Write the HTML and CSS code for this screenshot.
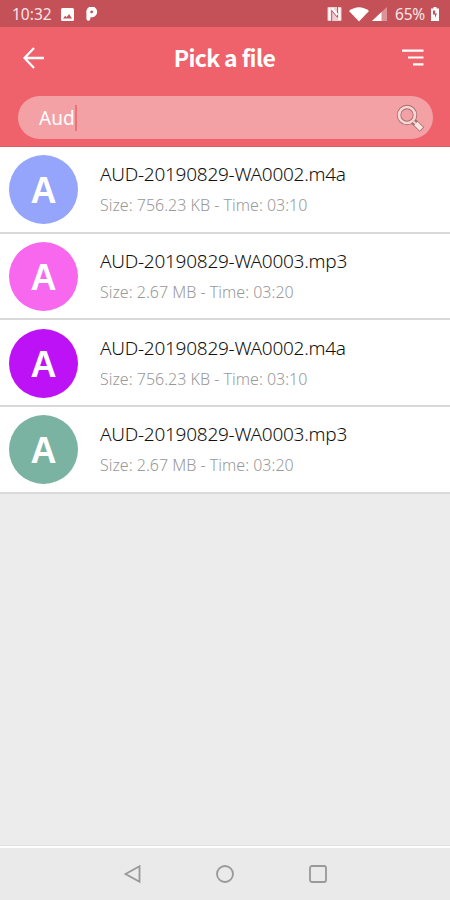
FILE: index.html
```html
<!DOCTYPE html>
<html lang="en">
<head>
<meta charset="utf-8">
<title>Pick a file</title>
<link rel="stylesheet" href="styles.css">
</head>
<body>
<div class="screen">
  <div class="status">
    <span class="clock">10:32</span>
    <svg class="photo" width="13" height="13" viewBox="0 0 13 13"><rect width="13" height="13" rx="1.5" fill="#fff"/><path d="M2 10.5 4.2 7.8 5.7 9.3 8 6 11 10.5Z" fill="#c45058"/></svg>
    <svg class="park" width="12" height="14" viewBox="0 0 12 14"><path d="M2.4 11.8V5.5A3.4 3.4 0 1 1 6 8.2H4.5" fill="none" stroke="#fff" stroke-width="4" stroke-linecap="round"/></svg>
    <span class="spacer"></span>
    <svg class="nfc" width="15" height="14" viewBox="0 0 15 14"><rect x=".5" width="14" height="14" rx="1" fill="#f0cdd0"/><path d="M4.7 14V3.5L10.5 10.5V0" fill="none" stroke="#bb5d65" stroke-width="1"/><path d="M2.5 1V13M5 1.2 10.5 7.8M12.5 1V13" stroke="#fff" stroke-width="2"/></svg>
    <svg class="wifi" width="20" height="15" viewBox="0 0 20 15"><path d="M0 4Q10-3.5 20 4L10 14.5Z" fill="#fff"/></svg>
    <svg class="signal" width="15" height="14" viewBox="0 0 15 14"><path d="M0 14 15 0V14Z" fill="#dc9398"/><path d="M0 14 9.5 5V14Z" fill="#fff"/></svg>
    <span class="percent">65%</span>
    <svg width="8" height="14" viewBox="0 0 8 14"><path d="M2.5 0h3v1.5H8V14H0V1.5H2.5Z" fill="#fff"/><path d="M2 3.5V7.5H4V11L6 6.5H4.2V3.5Z" fill="#c45058"/></svg>
  </div>
  <header class="header">
    <div class="toolbar">
      <svg class="back" width="22" height="22" viewBox="0 0 22 22"><path d="M11 1 1.5 11 11 21M1.5 11H21" fill="none" stroke="#fff" stroke-width="2.3"/></svg>
      <h1 class="title">Pick a file</h1>
      <svg class="sort" width="22" height="17" viewBox="0 0 22 17"><path d="M0 1.6H21.5M6 8.5H21.5M11 15.3H21.5" stroke="#fff" stroke-width="2.2"/></svg>
    </div>
    <div class="search">
      <span class="query">Aud</span><span class="caret"></span>
      <svg class="lens" width="30" height="30" viewBox="0 0 30 30"><g fill="none"><circle cx="12" cy="12" r="8" stroke="#a06e70" stroke-width="4.4"/><path d="M18 18 27 26.5" stroke="#a06e70" stroke-width="6.4"/><circle cx="12" cy="12" r="8" stroke="#f9d6d1" stroke-width="2.7"/><path d="M17.5 17.5 21 21" stroke="#f7ccc9" stroke-width="2"/><path d="M20.8 20.5 26.4 25.9" stroke="#fbe4de" stroke-width="4.8"/></g></svg>
    </div>
  </header>
  <main class="list">
    <div class="row"><div class="avatar blue">A</div><div class="info"><div class="name">AUD-20190829-WA0002.m4a</div><div class="meta">Size: 756.23 KB - Time: 03:10</div></div></div>
    <div class="row"><div class="avatar pink">A</div><div class="info"><div class="name">AUD-20190829-WA0003.mp3</div><div class="meta">Size: 2.67 MB - Time: 03:20</div></div></div>
    <div class="row"><div class="avatar purple">A</div><div class="info"><div class="name">AUD-20190829-WA0002.m4a</div><div class="meta">Size: 756.23 KB - Time: 03:10</div></div></div>
    <div class="row"><div class="avatar green">A</div><div class="info"><div class="name">AUD-20190829-WA0003.mp3</div><div class="meta">Size: 2.67 MB - Time: 03:20</div></div></div>
  </main>
  <nav class="nav">
    <svg width="20" height="20" viewBox="0 0 20 20"><path d="M2.5 10 16.5 2.2V17.8Z"/></svg>
    <svg width="20" height="20" viewBox="0 0 20 20"><circle cx="10" cy="10" r="8"/></svg>
    <svg width="20" height="20" viewBox="0 0 20 20"><rect x="2" y="2" width="16" height="16" rx="2"/></svg>
  </nav>
</div>
</body>
</html>
```

FILE: styles.css
```css
* { box-sizing: border-box; }
body { margin: 0; font-family: "Noto Sans", sans-serif; }
svg { display: block; flex: none; }
.screen { width: 450px; height: 900px; display: flex; flex-direction: column; background: #ececec; overflow: hidden; }
.status { height: 27px; flex: none; display: flex; align-items: center; padding: 1px 11px 0 12px; background: #c45058; color: #f8e6e7; font-size: 15.5px; }
.clock { width: 49px; white-space: nowrap; }
.photo { margin-right: 12px; }
.spacer { flex: 1; }
.nfc { margin-right: 7px; }
.wifi { margin-right: 3px; }
.signal { margin-right: 8px; }
.percent { width: 36px; letter-spacing: -0.2px; }
.header { height: 120px; flex: none; background: #ef626c; border-bottom: 1px solid #e25963; }
.toolbar { height: 69px; display: flex; align-items: center; justify-content: space-between; padding: 0 26px 8px 23px; }
.title { margin: -2px 0 0 2px; color: #fff; font-family: "Noto Sans CJK SC", "Noto Sans", sans-serif; font-size: 23px; font-weight: 700; line-height: 30px; letter-spacing: -0.65px; white-space: nowrap; }
.search { height: 43px; margin: 0 17px 0 18px; padding: 0 8px 0 21px; border-radius: 22px; background: #f4a1a6; display: flex; align-items: center; }
.query { color: #fff; font-size: 19px; }
.caret { width: 2px; height: 26px; background: #ec7179; }
.lens { margin-left: auto; }
.list { flex: none; }
.row { height: 86.6px; display: flex; padding: 8.4px 0 0 9px; background: #fff; border-bottom: 2px solid #d9d9d9; }
.row:last-child { height: 87.2px; }
.avatar { width: 69px; height: 69px; flex: none; border-radius: 50%; color: #fff; font-family: "Liberation Sans", sans-serif; font-size: 36px; font-weight: 700; line-height: 72px; text-align: center; }
.blue { background: #95a5fb; }
.pink { background: #f768ee; }
.purple { background: #be12f6; }
.green { background: #7ab3a2; }
.info { margin-left: 22px; white-space: nowrap; }
.name { margin-top: 5px; color: #111; font-size: 19px; font-weight: 300; line-height: 28px; letter-spacing: -0.26px; }
.meta { margin-top: 4px; color: #999; font-size: 16px; font-weight: 300; line-height: 26px; }
.nav { height: 54px; flex: none; margin-top: auto; display: flex; justify-content: center; gap: 72.5px; padding-top: 16px; border-top: 2px solid #fff; box-shadow: 0 -1px #e0e0e0; background: #eaeaea; }
.nav svg { fill: none; stroke: #999; stroke-width: 1.8; }
```
